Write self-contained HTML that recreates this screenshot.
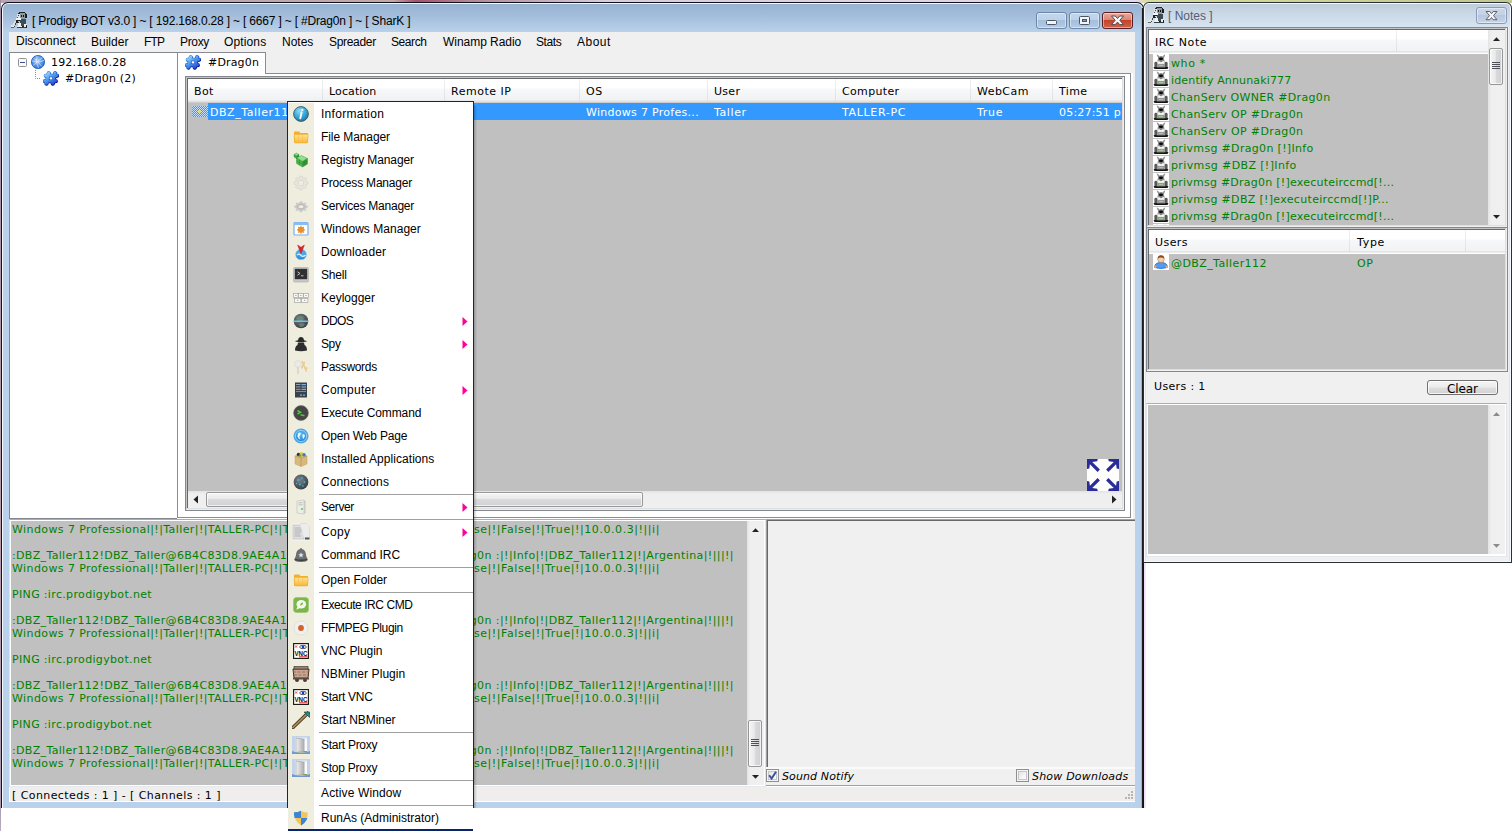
<!DOCTYPE html>
<html lang="en"><head><meta charset="utf-8"><title>Prodigy BOT v3.0</title>
<style>
html,body{margin:0;padding:0;background:#fff;}
body{width:1512px;height:831px;position:relative;overflow:hidden;}
div,span.t,svg{position:absolute;box-sizing:border-box;}
span.t{white-space:pre;color:#000;}
.ls{font:12px/16px "Liberation Sans",sans-serif;}
.dv{font:11px/14px "DejaVu Sans","Liberation Sans",sans-serif;}
.it{font-style:italic;}
</style></head>
<body>
<div style="left:0px;top:0px;width:1512px;height:3px;background:linear-gradient(90deg,#b8a4b4 0,#c4a8ac 26%,#a85070 27.5%,#b08898 31%,#d8cce0 40%,#e4d8ec 75%,#d8dc9c 76%,#c0c890 100%);"></div>
<div style="left:0px;top:0px;width:1px;height:831px;background:linear-gradient(180deg,#a08ea2 0,#b49aa6 60%,#a99bb0 97%,#b8aec0 100%);"></div>
<div style="left:1px;top:2px;width:1143px;height:806px;background:#10141a;border-radius:7px 7px 0 0;"></div>
<div style="left:2px;top:3px;width:1141px;height:805px;background:#f4f8fd;border-radius:6px 6px 0 0;"></div>
<div style="left:3px;top:4px;width:1139px;height:804px;background:linear-gradient(180deg,#98b3d2 0,#a3bddb 12px,#b9d1ea 28px,#b9d1ea 100%);border-radius:5px 5px 0 0;"></div>
<div style="left:1141px;top:8px;width:1px;height:800px;background:#4fd2fa;"></div>
<div style="left:1142px;top:8px;width:1px;height:800px;background:#1c1718;"></div>
<div style="left:9px;top:32px;width:1126px;height:770px;background:#f0f0f0;"></div>
<span class="t ls" style="top:13px;left:32px;letter-spacing:-0.18px;">[ Prodigy BOT v3.0 ] ~ [ 192.168.0.28 ] ~ [ 6667 ] ~ [ #Drag0n ] ~ [ SharK ]</span>
<div style="left:1036px;top:12px;width:31px;height:17px;background:linear-gradient(180deg,#c3d6ec 0,#bdd1e9 45%,#a4bedc 50%,#b3cbe6 100%);border:1px solid #6d87a8;border-radius:3px;box-shadow:inset 0 0 0 1px rgba(255,255,255,.45);"></div>
<div style="left:1069px;top:12px;width:31px;height:17px;background:linear-gradient(180deg,#c3d6ec 0,#bdd1e9 45%,#a4bedc 50%,#b3cbe6 100%);border:1px solid #6d87a8;border-radius:3px;box-shadow:inset 0 0 0 1px rgba(255,255,255,.45);"></div>
<div style="left:1102px;top:12px;width:31px;height:17px;background:linear-gradient(180deg,#e9a99b 0,#dc8674 45%,#c5432b 50%,#cf6247 100%);border:1px solid #5a1f24;border-radius:3px;box-shadow:inset 0 0 0 1px rgba(255,255,255,.45);"></div>
<svg style="left:1046px;top:20px;" width="11" height="6" viewBox="0 0 11 6"><rect x="0.5" y="0.5" width="10" height="4" rx="1" fill="#f4f4f4" stroke="#4a5566"/></svg>
<svg style="left:1079px;top:16px;" width="11" height="10" viewBox="0 0 11 10"><rect x="0.5" y="0.5" width="10" height="8" rx="1" fill="#f4f4f4" stroke="#4a5566"/><rect x="3.5" y="3.5" width="4" height="2" fill="#7b9cc9" stroke="#4a5566"/></svg>
<svg style="left:1110px;top:15px;" width="15" height="11" viewBox="0 0 15 11"><path d="M1.5 1 L5.3 1 L7.5 3.5 L9.7 1 L13.500 1 L9.800 5.300 L13.500 9.600 L9.700 9.600 L7.500 7.100 L5.300 9.600 L1.500 9.600 L5.200 5.300 Z" fill="#f6f6f6" stroke="#4b4f5e" stroke-width="1"/></svg>
<span class="t ls" style="top:33px;left:16px;letter-spacing:0.02px;">Disconnect</span>
<span class="t ls" style="top:34px;left:91px;letter-spacing:0.01px;">Builder</span>
<span class="t ls" style="top:34px;left:144px;letter-spacing:-0.8px;">FTP</span>
<span class="t ls" style="top:34px;left:180px;letter-spacing:-0.34px;">Proxy</span>
<span class="t ls" style="top:34px;left:224px;letter-spacing:0.13px;">Options</span>
<span class="t ls" style="top:34px;left:282px;letter-spacing:-0.01px;">Notes</span>
<span class="t ls" style="top:34px;left:329px;letter-spacing:-0.31px;">Spreader</span>
<span class="t ls" style="top:34px;left:391px;letter-spacing:-0.42px;">Search</span>
<span class="t ls" style="top:34px;left:443px;letter-spacing:-0.04px;">Winamp Radio</span>
<span class="t ls" style="top:34px;left:536px;letter-spacing:-0.41px;">Stats</span>
<span class="t ls" style="top:34px;left:577px;letter-spacing:0.49px;">About</span>
<div style="left:9px;top:52px;width:169px;height:467px;background:#fff;border:1px solid #828790;border-right:none;"></div>
<svg style="left:18px;top:58px;" width="9" height="9" viewBox="0 0 9 9"><rect x="0.5" y="0.5" width="8" height="8" rx="1" fill="#fafafa" stroke="#919191"/><rect x="2" y="4" width="5" height="1" fill="#3f4f9a"/></svg>
<svg style="left:35px;top:70px;" width="8" height="9" viewBox="0 0 8 9"><path d="M0.5 0 V8.5 H6" fill="none" stroke="#8a8a8a" stroke-width="1" stroke-dasharray="1 1"/></svg>
<span class="t dv" style="top:56px;left:51px;letter-spacing:0.17px;">192.168.0.28</span>
<span class="t dv" style="top:72px;left:65px;letter-spacing:0.18px;">#Drag0n (2)</span>
<div style="left:177px;top:73px;width:956px;height:446px;background:#fff;"></div>
<div style="left:177px;top:73px;width:954px;height:445px;background:#fff;border:1px solid #898c95;"></div>
<div style="left:177px;top:52px;width:89px;height:22px;background:#fff;border:1px solid #898c95;border-bottom:none;"></div>
<span class="t dv" style="top:56px;left:208px;letter-spacing:0.16px;">#Drag0n</span>
<div style="left:185px;top:76px;width:940px;height:435px;background:#828790;"></div>
<div style="left:186px;top:77px;width:938px;height:433px;background:#efefef;"></div>
<div style="left:186px;top:77px;width:937px;height:432px;background:#c4c4c4;"></div>
<div style="left:187px;top:78px;width:936px;height:431px;background:#dedede;"></div>
<div style="left:187px;top:78px;width:935px;height:430px;background:#696969;"></div>
<div style="left:188px;top:79px;width:934px;height:429px;background:#c0c0c0;"></div>
<div style="left:188px;top:79px;width:934px;height:24px;background:linear-gradient(180deg,#fff 0,#fff 9px,#f7f8fa 10px,#f1f2f4 21px,#e0e1e3 22px,#e0e1e3 23px,#cdcdcd 23px);"></div>
<div style="left:322px;top:79px;width:1px;height:22px;background:linear-gradient(180deg,#f2f2f2,#dedfe1);"></div>
<div style="left:444px;top:79px;width:1px;height:22px;background:linear-gradient(180deg,#f2f2f2,#dedfe1);"></div>
<div style="left:579px;top:79px;width:1px;height:22px;background:linear-gradient(180deg,#f2f2f2,#dedfe1);"></div>
<div style="left:707px;top:79px;width:1px;height:22px;background:linear-gradient(180deg,#f2f2f2,#dedfe1);"></div>
<div style="left:835px;top:79px;width:1px;height:22px;background:linear-gradient(180deg,#f2f2f2,#dedfe1);"></div>
<div style="left:970px;top:79px;width:1px;height:22px;background:linear-gradient(180deg,#f2f2f2,#dedfe1);"></div>
<div style="left:1052px;top:79px;width:1px;height:22px;background:linear-gradient(180deg,#f2f2f2,#dedfe1);"></div>
<span class="t dv" style="top:85px;left:194px;letter-spacing:0.37px;">Bot</span>
<span class="t dv" style="top:85px;left:329px;letter-spacing:0.11px;">Location</span>
<span class="t dv" style="top:85px;left:451px;letter-spacing:0.52px;">Remote IP</span>
<span class="t dv" style="top:85px;left:586px;letter-spacing:0.7px;">OS</span>
<span class="t dv" style="top:85px;left:714px;letter-spacing:0.28px;">User</span>
<span class="t dv" style="top:85px;left:842px;letter-spacing:0.34px;">Computer</span>
<span class="t dv" style="top:85px;left:977px;letter-spacing:0.46px;">WebCam</span>
<span class="t dv" style="top:85px;left:1059px;letter-spacing:0.39px;">Time</span>
<div style="left:208px;top:103px;width:914px;height:17px;background:#3399ff;"></div>
<div style="left:192px;top:106px;width:16px;height:11px;background:repeating-conic-gradient(#3399ff 0 25%,#c8dff8 0 50%) 0 0/2px 2px;"></div>
<div style="left:198px;top:110px;width:3px;height:3px;background:#d8d890;"></div>
<span class="t dv" style="top:106px;left:210px;color:#fff;letter-spacing:0.55px;">DBZ_Taller112</span>
<span class="t dv" style="top:106px;left:586px;color:#fff;letter-spacing:0.29px;">Windows 7 Profes...</span>
<span class="t dv" style="top:106px;left:714px;color:#fff;letter-spacing:0.61px;">Taller</span>
<span class="t dv" style="top:106px;left:842px;color:#fff;letter-spacing:0.66px;">TALLER-PC</span>
<span class="t dv" style="top:106px;left:977px;color:#fff;letter-spacing:0.7px;">True</span>
<div style="left:1059px;top:103px;width:63px;height:17px;overflow:hidden;"><span class="t dv" style="left:0;top:3px;color:#fff;letter-spacing:0.2px;">05:27:51 p.m.</span></div>
<div style="left:188px;top:491px;width:934px;height:17px;background:linear-gradient(180deg,#e3e3e3 0,#efefef 3px,#f0f0f0 100%);"></div>
<div style="left:206px;top:492px;width:437px;height:15px;background:linear-gradient(180deg,#f5f5f5 0,#e9e9eb 45%,#d9dadc 50%,#cfd0d3 100%);border:1px solid #979797;border-radius:2px;box-shadow:inset 0 0 0 1px rgba(255,255,255,.7);"></div>
<svg style="left:193px;top:495px;" width="6" height="9" viewBox="0 0 6 9"><path d="M5 0.5 L0.5 4.5 L5 8.5 Z" fill="#222"/></svg>
<svg style="left:1111px;top:495px;" width="6" height="9" viewBox="0 0 6 9"><path d="M1 0.5 L5.5 4.5 L1 8.5 Z" fill="#222"/></svg>
<svg style="left:1087px;top:459px;" width="32" height="32" viewBox="0 0 32 32"><rect width="32" height="32" fill="#fdfdfb"/><g fill="#2a2c99"><path d="M0 0 H10.800 L10.200 2.300 L5.200 2.900 L12.900 10.600 L10.600 12.900 L2.900 5.200 L2.300 9.600 L0 10 Z"/><path transform="translate(32 0) scale(-1 1)" d="M0 0 H10.800 L10.200 2.300 L5.200 2.900 L12.900 10.600 L10.600 12.900 L2.900 5.200 L2.300 9.600 L0 10 Z"/><path transform="translate(0 32) scale(1 -1)" d="M0 0 H10.800 L10.200 2.300 L5.200 2.900 L12.900 10.600 L10.600 12.900 L2.900 5.200 L2.300 9.600 L0 10 Z"/><path transform="translate(32 32) scale(-1 -1)" d="M0 0 H10.800 L10.200 2.300 L5.200 2.900 L12.900 10.600 L10.600 12.900 L2.900 5.200 L2.300 9.600 L0 10 Z"/></g></svg>
<div style="left:9px;top:519px;width:757px;height:268px;background:#fff;border:1px solid #e2e3ea;border-top-color:#abadb3;border-bottom-color:#e3e9ef;"></div>
<div style="left:11px;top:521px;width:736px;height:264px;background:#c0c0c0;"></div>
<div style="left:747px;top:521px;width:17px;height:264px;background:linear-gradient(90deg,#e3e3e3 0,#efefef 3px,#f0f0f0 100%);"></div>
<svg style="left:751px;top:527px;" width="9" height="6" viewBox="0 0 9 6"><path d="M1 5 L4.500 1.200 L8 5 Z" fill="#222"/></svg>
<svg style="left:751px;top:774px;" width="9" height="6" viewBox="0 0 9 6"><path d="M1 1 L4.500 4.800 L8 1 Z" fill="#222"/></svg>
<div style="left:748px;top:720px;width:14px;height:47px;background:linear-gradient(90deg,#f5f5f5 0,#e9e9eb 45%,#d9dadc 50%,#cfd0d3 100%);border:1px solid #979797;border-radius:2px;box-shadow:inset 0 0 0 1px rgba(255,255,255,.7);"></div>
<div style="left:751px;top:739px;width:8px;height:1px;background:#4d5157;"></div>
<div style="left:751px;top:741px;width:8px;height:1px;background:#4d5157;"></div>
<div style="left:751px;top:743px;width:8px;height:1px;background:#4d5157;"></div>
<div style="left:751px;top:745px;width:8px;height:1px;background:#4d5157;"></div>
<div style="left:11px;top:521px;width:736px;height:264px;overflow:hidden;">
<span class="t dv" style="left:1px;top:2px;color:#008000;letter-spacing:0.41px;max-width:290px;overflow:hidden;">Windows 7 Professional|!|Taller|!|TALLER-PC|!|True|!|05:27:51 p.m.|!|Fal</span>
<span class="t dv" style="right:87px;top:2px;color:#008000;letter-spacing:0.57px;">se|!|False|!|True|!|10.0.0.3|!||i|</span>
<span class="t dv" style="left:1px;top:28px;color:#008000;letter-spacing:0.33px;max-width:290px;overflow:hidden;">:DBZ_Taller112!DBZ_Taller@6B4C83D8.9AE4A1C7.5D20F1B3.IP PRIVMSG #Dra</span>
<span class="t dv" style="right:13px;top:28px;color:#008000;letter-spacing:0.42px;">g0n :|!|Info|!|DBZ_Taller112|!|Argentina|!|||!|</span>
<span class="t dv" style="left:1px;top:41px;color:#008000;letter-spacing:0.41px;max-width:290px;overflow:hidden;">Windows 7 Professional|!|Taller|!|TALLER-PC|!|True|!|05:27:51 p.m.|!|Fal</span>
<span class="t dv" style="right:87px;top:41px;color:#008000;letter-spacing:0.57px;">se|!|False|!|True|!|10.0.0.3|!||i|</span>
<span class="t dv" style="left:1px;top:67px;color:#008000;letter-spacing:0.34px;max-width:Nonepx;overflow:hidden;">PING :irc.prodigybot.net</span>
<span class="t dv" style="left:1px;top:93px;color:#008000;letter-spacing:0.33px;max-width:290px;overflow:hidden;">:DBZ_Taller112!DBZ_Taller@6B4C83D8.9AE4A1C7.5D20F1B3.IP PRIVMSG #Dra</span>
<span class="t dv" style="right:13px;top:93px;color:#008000;letter-spacing:0.42px;">g0n :|!|Info|!|DBZ_Taller112|!|Argentina|!|||!|</span>
<span class="t dv" style="left:1px;top:106px;color:#008000;letter-spacing:0.41px;max-width:290px;overflow:hidden;">Windows 7 Professional|!|Taller|!|TALLER-PC|!|True|!|05:27:51 p.m.|!|Fal</span>
<span class="t dv" style="right:87px;top:106px;color:#008000;letter-spacing:0.57px;">se|!|False|!|True|!|10.0.0.3|!||i|</span>
<span class="t dv" style="left:1px;top:132px;color:#008000;letter-spacing:0.34px;max-width:Nonepx;overflow:hidden;">PING :irc.prodigybot.net</span>
<span class="t dv" style="left:1px;top:158px;color:#008000;letter-spacing:0.33px;max-width:290px;overflow:hidden;">:DBZ_Taller112!DBZ_Taller@6B4C83D8.9AE4A1C7.5D20F1B3.IP PRIVMSG #Dra</span>
<span class="t dv" style="right:13px;top:158px;color:#008000;letter-spacing:0.42px;">g0n :|!|Info|!|DBZ_Taller112|!|Argentina|!|||!|</span>
<span class="t dv" style="left:1px;top:171px;color:#008000;letter-spacing:0.41px;max-width:290px;overflow:hidden;">Windows 7 Professional|!|Taller|!|TALLER-PC|!|True|!|05:27:51 p.m.|!|Fal</span>
<span class="t dv" style="right:87px;top:171px;color:#008000;letter-spacing:0.57px;">se|!|False|!|True|!|10.0.0.3|!||i|</span>
<span class="t dv" style="left:1px;top:197px;color:#008000;letter-spacing:0.34px;max-width:Nonepx;overflow:hidden;">PING :irc.prodigybot.net</span>
<span class="t dv" style="left:1px;top:223px;color:#008000;letter-spacing:0.33px;max-width:290px;overflow:hidden;">:DBZ_Taller112!DBZ_Taller@6B4C83D8.9AE4A1C7.5D20F1B3.IP PRIVMSG #Dra</span>
<span class="t dv" style="right:13px;top:223px;color:#008000;letter-spacing:0.42px;">g0n :|!|Info|!|DBZ_Taller112|!|Argentina|!|||!|</span>
<span class="t dv" style="left:1px;top:236px;color:#008000;letter-spacing:0.41px;max-width:290px;overflow:hidden;">Windows 7 Professional|!|Taller|!|TALLER-PC|!|True|!|05:27:51 p.m.|!|Fal</span>
<span class="t dv" style="right:87px;top:236px;color:#008000;letter-spacing:0.57px;">se|!|False|!|True|!|10.0.0.3|!||i|</span>
</div>
<div style="left:766px;top:519px;width:369px;height:249px;background:#a0a0a0;"></div>
<div style="left:767px;top:520px;width:368px;height:248px;background:#696969;"></div>
<div style="left:768px;top:521px;width:367px;height:247px;background:#f0f0f0;"></div>
<div style="left:766px;top:767px;width:369px;height:2px;background:#fbfbfb;"></div>
<div style="left:766px;top:769px;width:13px;height:13px;background:linear-gradient(135deg,#d9dadc 0,#f6f6f6 60%,#fff 100%);border:1px solid #8e8f8f;box-shadow:inset 0 0 0 1px #f4f4f4, inset 0 0 0 2px #c4c6ca;"></div>
<svg style="left:768px;top:771px;" width="9" height="9" viewBox="0 0 9 9"><path d="M1.2 4.2 L3.6 7.6 L8 0.8" fill="none" stroke="#3a4f9c" stroke-width="1.9"/></svg>
<span class="t dv" style="top:770px;left:782px;letter-spacing:0.11px;font-style:italic;">Sound Notify</span>
<div style="left:1016px;top:769px;width:13px;height:13px;background:linear-gradient(135deg,#d9dadc 0,#f6f6f6 60%,#fff 100%);border:1px solid #8e8f8f;box-shadow:inset 0 0 0 1px #f4f4f4, inset 0 0 0 2px #c4c6ca;"></div>
<span class="t dv" style="top:770px;left:1032px;letter-spacing:0.2px;font-style:italic;">Show Downloads</span>
<div style="left:766px;top:785px;width:369px;height:1px;background:#a0a0a0;"></div>
<div style="left:766px;top:786px;width:369px;height:1px;background:#fff;"></div>
<div style="left:9px;top:787px;width:1126px;height:15px;background:#fff;"></div>
<div style="left:10px;top:787px;width:1125px;height:14px;background:#f0eded;"></div>
<span class="t dv" style="top:789px;left:12px;letter-spacing:0.42px;">[ Connecteds : 1 ] - [ Channels : 1 ]</span>
<div style="left:1131px;top:791px;width:2px;height:2px;background:#b8b4b4;"></div>
<div style="left:1128px;top:794px;width:2px;height:2px;background:#b8b4b4;"></div>
<div style="left:1131px;top:794px;width:2px;height:2px;background:#b8b4b4;"></div>
<div style="left:1125px;top:797px;width:2px;height:2px;background:#b8b4b4;"></div>
<div style="left:1128px;top:797px;width:2px;height:2px;background:#b8b4b4;"></div>
<div style="left:1131px;top:797px;width:2px;height:2px;background:#b8b4b4;"></div>
<div style="left:1143px;top:2px;width:369px;height:561px;background:#2a2f38;border-radius:6px 6px 0 0;"></div>
<div style="left:1144px;top:3px;width:367px;height:559px;background:#f6f9fd;border-radius:5px 5px 0 0;"></div>
<div style="left:1145px;top:4px;width:365px;height:557px;background:linear-gradient(180deg,#bfcddb 0,#cbd8e6 10px,#d7e4f2 23px,#d7e4f2 100%);border-radius:4px 4px 0 0;"></div>
<div style="left:1146px;top:27px;width:363px;height:534px;background:#f0f0f0;"></div>
<div style="left:1144px;top:563px;width:2px;height:245px;background:linear-gradient(90deg,#e6dcf4,#f4eefa);"></div>
<span class="t ls" style="top:8px;left:1168px;color:#565e74;letter-spacing:0px;">[ Notes ]</span>
<div style="left:1476px;top:7px;width:31px;height:17px;background:linear-gradient(180deg,#c9d7e7 0,#c3d2e4 45%,#b6c8de 50%,#c6d5e7 100%);border:1px solid #8a9bbd;border-radius:3px;box-shadow:inset 0 0 0 1px rgba(255,255,255,.45);"></div>
<svg style="left:1485px;top:10px;" width="13" height="11" viewBox="0 0 13 11"><path d="M1 1.500 L4.800 1.500 L6.500 3.700 L8.200 1.500 L12 1.500 L8.500 5.600 L12 9.700 L8.200 9.700 L6.500 7.500 L4.800 9.700 L1 9.700 L4.500 5.600 Z" fill="#f6f6f6" stroke="#5a5f6e" stroke-width="1"/></svg>
<div style="left:1146px;top:27px;width:362px;height:201px;background:#828790;"></div>
<div style="left:1147px;top:28px;width:360px;height:199px;background:#efefef;"></div>
<div style="left:1147px;top:28px;width:359px;height:198px;background:#c4c4c4;"></div>
<div style="left:1148px;top:29px;width:358px;height:197px;background:#dedede;"></div>
<div style="left:1148px;top:29px;width:357px;height:196px;background:#696969;"></div>
<div style="left:1149px;top:30px;width:356px;height:195px;background:#c0c0c0;"></div>
<div style="left:1149px;top:30px;width:339px;height:24px;background:linear-gradient(180deg,#fff 0,#fff 9px,#f7f8fa 10px,#f1f2f4 21px,#d8d8d8 22px,#fff 23px);"></div>
<div style="left:1396px;top:30px;width:1px;height:22px;background:linear-gradient(180deg,#f2f2f2,#dedfe1);"></div>
<span class="t dv" style="top:36px;left:1155px;letter-spacing:0.57px;">IRC Note</span>
<div style="left:1488px;top:30px;width:17px;height:195px;background:linear-gradient(90deg,#e3e3e3 0,#efefef 3px,#f0f0f0 100%);"></div>
<svg style="left:1492px;top:36px;" width="9" height="6" viewBox="0 0 9 6"><path d="M1 5 L4.500 1.200 L8 5 Z" fill="#222"/></svg>
<svg style="left:1492px;top:214px;" width="9" height="6" viewBox="0 0 9 6"><path d="M1 1 L4.500 4.800 L8 1 Z" fill="#222"/></svg>
<div style="left:1489px;top:48px;width:14px;height:37px;background:linear-gradient(90deg,#f5f5f5 0,#e9e9eb 45%,#d9dadc 50%,#cfd0d3 100%);border:1px solid #979797;border-radius:2px;box-shadow:inset 0 0 0 1px rgba(255,255,255,.7);"></div>
<div style="left:1492px;top:62px;width:8px;height:1px;background:#4d5157;"></div>
<div style="left:1492px;top:64px;width:8px;height:1px;background:#4d5157;"></div>
<div style="left:1492px;top:66px;width:8px;height:1px;background:#4d5157;"></div>
<div style="left:1492px;top:68px;width:8px;height:1px;background:#4d5157;"></div>
<div style="left:1149px;top:54px;width:339px;height:171px;overflow:hidden;">
<svg style="left:4px;top:0px" width="16" height="16" viewBox="0 0 16 16"><rect width="16" height="16" fill="#fff"/><path d="M3.600 .600 L5.200 .900 L7 3.800 L5.400 4.800 Z M12.400 .600 L10.800 .900 L9 3.800 L10.600 4.800 Z" fill="#909090"/><path d="M4.600 8.600 Q4.300 2 8 2 Q11.700 2 11.400 8.600 Z" fill="#858585"/><ellipse cx="8" cy="4.800" rx="2.100" ry="1.400" fill="#0c0c0c"/><path d="M5.400 6.400 L8 8.800 L10.600 6.400 L10.800 8.800 L8 10.400 L5.200 8.800 Z" fill="#fff"/><rect x="1.400" y="7.800" width="3" height="6.200" rx="1.400" fill="#5a5a5a"/><rect x="11.600" y="7.800" width="3" height="6.200" rx="1.400" fill="#5a5a5a"/><rect x="4.200" y="9.800" width="7.600" height="3.400" fill="#949494"/><rect x="5.800" y="10.900" width="4.400" height="1.200" fill="#9ccf88"/><path d="M.600 13.600 Q.600 12.900 1.800 12.900 L4.500 13.200 H11.500 L14.200 12.900 Q15.400 12.900 15.400 13.600 Q15.400 15.100 13 15.100 H3 Q.600 15.100 .600 13.600 Z" fill="#121212"/></svg>
<span class="t dv" style="left:22px;top:3px;color:#008000;letter-spacing:0.62px;">who *</span>
<svg style="left:4px;top:17px" width="16" height="16" viewBox="0 0 16 16"><rect width="16" height="16" fill="#fff"/><path d="M3.600 .600 L5.200 .900 L7 3.800 L5.400 4.800 Z M12.400 .600 L10.800 .900 L9 3.800 L10.600 4.800 Z" fill="#909090"/><path d="M4.600 8.600 Q4.300 2 8 2 Q11.700 2 11.400 8.600 Z" fill="#858585"/><ellipse cx="8" cy="4.800" rx="2.100" ry="1.400" fill="#0c0c0c"/><path d="M5.400 6.400 L8 8.800 L10.600 6.400 L10.800 8.800 L8 10.400 L5.200 8.800 Z" fill="#fff"/><rect x="1.400" y="7.800" width="3" height="6.200" rx="1.400" fill="#5a5a5a"/><rect x="11.600" y="7.800" width="3" height="6.200" rx="1.400" fill="#5a5a5a"/><rect x="4.200" y="9.800" width="7.600" height="3.400" fill="#949494"/><rect x="5.800" y="10.900" width="4.400" height="1.200" fill="#9ccf88"/><path d="M.600 13.600 Q.600 12.900 1.800 12.900 L4.500 13.200 H11.500 L14.200 12.900 Q15.400 12.900 15.400 13.600 Q15.400 15.100 13 15.100 H3 Q.600 15.100 .600 13.600 Z" fill="#121212"/></svg>
<span class="t dv" style="left:22px;top:20px;color:#008000;letter-spacing:0.15px;">identify Annunaki777</span>
<svg style="left:4px;top:34px" width="16" height="16" viewBox="0 0 16 16"><rect width="16" height="16" fill="#fff"/><path d="M3.600 .600 L5.200 .900 L7 3.800 L5.400 4.800 Z M12.400 .600 L10.800 .900 L9 3.800 L10.600 4.800 Z" fill="#909090"/><path d="M4.600 8.600 Q4.300 2 8 2 Q11.700 2 11.400 8.600 Z" fill="#858585"/><ellipse cx="8" cy="4.800" rx="2.100" ry="1.400" fill="#0c0c0c"/><path d="M5.400 6.400 L8 8.800 L10.600 6.400 L10.800 8.800 L8 10.400 L5.200 8.800 Z" fill="#fff"/><rect x="1.400" y="7.800" width="3" height="6.200" rx="1.400" fill="#5a5a5a"/><rect x="11.600" y="7.800" width="3" height="6.200" rx="1.400" fill="#5a5a5a"/><rect x="4.200" y="9.800" width="7.600" height="3.400" fill="#949494"/><rect x="5.800" y="10.900" width="4.400" height="1.200" fill="#9ccf88"/><path d="M.600 13.600 Q.600 12.900 1.800 12.900 L4.500 13.200 H11.500 L14.200 12.900 Q15.400 12.900 15.400 13.600 Q15.400 15.100 13 15.100 H3 Q.600 15.100 .600 13.600 Z" fill="#121212"/></svg>
<span class="t dv" style="left:22px;top:37px;color:#008000;letter-spacing:0.32px;">ChanServ OWNER #Drag0n</span>
<svg style="left:4px;top:51px" width="16" height="16" viewBox="0 0 16 16"><rect width="16" height="16" fill="#fff"/><path d="M3.600 .600 L5.200 .900 L7 3.800 L5.400 4.800 Z M12.400 .600 L10.800 .900 L9 3.800 L10.600 4.800 Z" fill="#909090"/><path d="M4.600 8.600 Q4.300 2 8 2 Q11.700 2 11.400 8.600 Z" fill="#858585"/><ellipse cx="8" cy="4.800" rx="2.100" ry="1.400" fill="#0c0c0c"/><path d="M5.400 6.400 L8 8.800 L10.600 6.400 L10.800 8.800 L8 10.400 L5.200 8.800 Z" fill="#fff"/><rect x="1.400" y="7.800" width="3" height="6.200" rx="1.400" fill="#5a5a5a"/><rect x="11.600" y="7.800" width="3" height="6.200" rx="1.400" fill="#5a5a5a"/><rect x="4.200" y="9.800" width="7.600" height="3.400" fill="#949494"/><rect x="5.800" y="10.900" width="4.400" height="1.200" fill="#9ccf88"/><path d="M.600 13.600 Q.600 12.900 1.800 12.900 L4.500 13.200 H11.500 L14.200 12.900 Q15.400 12.900 15.400 13.600 Q15.400 15.100 13 15.100 H3 Q.600 15.100 .600 13.600 Z" fill="#121212"/></svg>
<span class="t dv" style="left:22px;top:54px;color:#008000;letter-spacing:0.37px;">ChanServ OP #Drag0n</span>
<svg style="left:4px;top:68px" width="16" height="16" viewBox="0 0 16 16"><rect width="16" height="16" fill="#fff"/><path d="M3.600 .600 L5.200 .900 L7 3.800 L5.400 4.800 Z M12.400 .600 L10.800 .900 L9 3.800 L10.600 4.800 Z" fill="#909090"/><path d="M4.600 8.600 Q4.300 2 8 2 Q11.700 2 11.400 8.600 Z" fill="#858585"/><ellipse cx="8" cy="4.800" rx="2.100" ry="1.400" fill="#0c0c0c"/><path d="M5.400 6.400 L8 8.800 L10.600 6.400 L10.800 8.800 L8 10.400 L5.200 8.800 Z" fill="#fff"/><rect x="1.400" y="7.800" width="3" height="6.200" rx="1.400" fill="#5a5a5a"/><rect x="11.600" y="7.800" width="3" height="6.200" rx="1.400" fill="#5a5a5a"/><rect x="4.200" y="9.800" width="7.600" height="3.400" fill="#949494"/><rect x="5.800" y="10.900" width="4.400" height="1.200" fill="#9ccf88"/><path d="M.600 13.600 Q.600 12.900 1.800 12.900 L4.500 13.200 H11.500 L14.200 12.900 Q15.400 12.900 15.400 13.600 Q15.400 15.100 13 15.100 H3 Q.600 15.100 .600 13.600 Z" fill="#121212"/></svg>
<span class="t dv" style="left:22px;top:71px;color:#008000;letter-spacing:0.37px;">ChanServ OP #Drag0n</span>
<svg style="left:4px;top:85px" width="16" height="16" viewBox="0 0 16 16"><rect width="16" height="16" fill="#fff"/><path d="M3.600 .600 L5.200 .900 L7 3.800 L5.400 4.800 Z M12.400 .600 L10.800 .900 L9 3.800 L10.600 4.800 Z" fill="#909090"/><path d="M4.600 8.600 Q4.300 2 8 2 Q11.700 2 11.400 8.600 Z" fill="#858585"/><ellipse cx="8" cy="4.800" rx="2.100" ry="1.400" fill="#0c0c0c"/><path d="M5.400 6.400 L8 8.800 L10.600 6.400 L10.800 8.800 L8 10.400 L5.200 8.800 Z" fill="#fff"/><rect x="1.400" y="7.800" width="3" height="6.200" rx="1.400" fill="#5a5a5a"/><rect x="11.600" y="7.800" width="3" height="6.200" rx="1.400" fill="#5a5a5a"/><rect x="4.200" y="9.800" width="7.600" height="3.400" fill="#949494"/><rect x="5.800" y="10.900" width="4.400" height="1.200" fill="#9ccf88"/><path d="M.600 13.600 Q.600 12.900 1.800 12.900 L4.500 13.200 H11.500 L14.200 12.900 Q15.400 12.900 15.400 13.600 Q15.400 15.100 13 15.100 H3 Q.600 15.100 .600 13.600 Z" fill="#121212"/></svg>
<span class="t dv" style="left:22px;top:88px;color:#008000;letter-spacing:0.32px;">privmsg #Drag0n [!]Info</span>
<svg style="left:4px;top:102px" width="16" height="16" viewBox="0 0 16 16"><rect width="16" height="16" fill="#fff"/><path d="M3.600 .600 L5.200 .900 L7 3.800 L5.400 4.800 Z M12.400 .600 L10.800 .900 L9 3.800 L10.600 4.800 Z" fill="#909090"/><path d="M4.600 8.600 Q4.300 2 8 2 Q11.700 2 11.400 8.600 Z" fill="#858585"/><ellipse cx="8" cy="4.800" rx="2.100" ry="1.400" fill="#0c0c0c"/><path d="M5.400 6.400 L8 8.800 L10.600 6.400 L10.800 8.800 L8 10.400 L5.200 8.800 Z" fill="#fff"/><rect x="1.400" y="7.800" width="3" height="6.200" rx="1.400" fill="#5a5a5a"/><rect x="11.600" y="7.800" width="3" height="6.200" rx="1.400" fill="#5a5a5a"/><rect x="4.200" y="9.800" width="7.600" height="3.400" fill="#949494"/><rect x="5.800" y="10.900" width="4.400" height="1.200" fill="#9ccf88"/><path d="M.600 13.600 Q.600 12.900 1.800 12.900 L4.500 13.200 H11.500 L14.200 12.900 Q15.400 12.900 15.400 13.600 Q15.400 15.100 13 15.100 H3 Q.600 15.100 .600 13.600 Z" fill="#121212"/></svg>
<span class="t dv" style="left:22px;top:105px;color:#008000;letter-spacing:0.38px;">privmsg #DBZ [!]Info</span>
<svg style="left:4px;top:119px" width="16" height="16" viewBox="0 0 16 16"><rect width="16" height="16" fill="#fff"/><path d="M3.600 .600 L5.200 .900 L7 3.800 L5.400 4.800 Z M12.400 .600 L10.800 .900 L9 3.800 L10.600 4.800 Z" fill="#909090"/><path d="M4.600 8.600 Q4.300 2 8 2 Q11.700 2 11.400 8.600 Z" fill="#858585"/><ellipse cx="8" cy="4.800" rx="2.100" ry="1.400" fill="#0c0c0c"/><path d="M5.400 6.400 L8 8.800 L10.600 6.400 L10.800 8.800 L8 10.400 L5.200 8.800 Z" fill="#fff"/><rect x="1.400" y="7.800" width="3" height="6.200" rx="1.400" fill="#5a5a5a"/><rect x="11.600" y="7.800" width="3" height="6.200" rx="1.400" fill="#5a5a5a"/><rect x="4.200" y="9.800" width="7.600" height="3.400" fill="#949494"/><rect x="5.800" y="10.900" width="4.400" height="1.200" fill="#9ccf88"/><path d="M.600 13.600 Q.600 12.900 1.800 12.900 L4.500 13.200 H11.500 L14.200 12.900 Q15.400 12.900 15.400 13.600 Q15.400 15.100 13 15.100 H3 Q.600 15.100 .600 13.600 Z" fill="#121212"/></svg>
<span class="t dv" style="left:22px;top:122px;color:#008000;letter-spacing:0.24px;">privmsg #Drag0n [!]executeirccmd[!...</span>
<svg style="left:4px;top:136px" width="16" height="16" viewBox="0 0 16 16"><rect width="16" height="16" fill="#fff"/><path d="M3.600 .600 L5.200 .900 L7 3.800 L5.400 4.800 Z M12.400 .600 L10.800 .900 L9 3.800 L10.600 4.800 Z" fill="#909090"/><path d="M4.600 8.600 Q4.300 2 8 2 Q11.700 2 11.400 8.600 Z" fill="#858585"/><ellipse cx="8" cy="4.800" rx="2.100" ry="1.400" fill="#0c0c0c"/><path d="M5.400 6.400 L8 8.800 L10.600 6.400 L10.800 8.800 L8 10.400 L5.200 8.800 Z" fill="#fff"/><rect x="1.400" y="7.800" width="3" height="6.200" rx="1.400" fill="#5a5a5a"/><rect x="11.600" y="7.800" width="3" height="6.200" rx="1.400" fill="#5a5a5a"/><rect x="4.200" y="9.800" width="7.600" height="3.400" fill="#949494"/><rect x="5.800" y="10.900" width="4.400" height="1.200" fill="#9ccf88"/><path d="M.600 13.600 Q.600 12.900 1.800 12.900 L4.500 13.200 H11.500 L14.200 12.900 Q15.400 12.900 15.400 13.600 Q15.400 15.100 13 15.100 H3 Q.600 15.100 .600 13.600 Z" fill="#121212"/></svg>
<span class="t dv" style="left:22px;top:139px;color:#008000;letter-spacing:0.32px;">privmsg #DBZ [!]executeirccmd[!]P...</span>
<svg style="left:4px;top:153px" width="16" height="16" viewBox="0 0 16 16"><rect width="16" height="16" fill="#fff"/><path d="M3.600 .600 L5.200 .900 L7 3.800 L5.400 4.800 Z M12.400 .600 L10.800 .900 L9 3.800 L10.600 4.800 Z" fill="#909090"/><path d="M4.600 8.600 Q4.300 2 8 2 Q11.700 2 11.400 8.600 Z" fill="#858585"/><ellipse cx="8" cy="4.800" rx="2.100" ry="1.400" fill="#0c0c0c"/><path d="M5.400 6.400 L8 8.800 L10.600 6.400 L10.800 8.800 L8 10.400 L5.200 8.800 Z" fill="#fff"/><rect x="1.400" y="7.800" width="3" height="6.200" rx="1.400" fill="#5a5a5a"/><rect x="11.600" y="7.800" width="3" height="6.200" rx="1.400" fill="#5a5a5a"/><rect x="4.200" y="9.800" width="7.600" height="3.400" fill="#949494"/><rect x="5.800" y="10.900" width="4.400" height="1.200" fill="#9ccf88"/><path d="M.600 13.600 Q.600 12.900 1.800 12.900 L4.500 13.200 H11.500 L14.200 12.900 Q15.400 12.900 15.400 13.600 Q15.400 15.100 13 15.100 H3 Q.600 15.100 .600 13.600 Z" fill="#121212"/></svg>
<span class="t dv" style="left:22px;top:156px;color:#008000;letter-spacing:0.24px;">privmsg #Drag0n [!]executeirccmd[!...</span>
<svg style="left:4px;top:170px" width="16" height="16" viewBox="0 0 16 16"><rect width="16" height="16" fill="#fff"/><path d="M3.600 .600 L5.200 .900 L7 3.800 L5.400 4.800 Z M12.400 .600 L10.800 .900 L9 3.800 L10.600 4.800 Z" fill="#909090"/><path d="M4.600 8.600 Q4.300 2 8 2 Q11.700 2 11.400 8.600 Z" fill="#858585"/><ellipse cx="8" cy="4.800" rx="2.100" ry="1.400" fill="#0c0c0c"/><path d="M5.400 6.400 L8 8.800 L10.600 6.400 L10.800 8.800 L8 10.400 L5.200 8.800 Z" fill="#fff"/><rect x="1.400" y="7.800" width="3" height="6.200" rx="1.400" fill="#5a5a5a"/><rect x="11.600" y="7.800" width="3" height="6.200" rx="1.400" fill="#5a5a5a"/><rect x="4.200" y="9.800" width="7.600" height="3.400" fill="#949494"/><rect x="5.800" y="10.900" width="4.400" height="1.200" fill="#9ccf88"/><path d="M.600 13.600 Q.600 12.900 1.800 12.900 L4.500 13.200 H11.500 L14.200 12.900 Q15.400 12.900 15.400 13.600 Q15.400 15.100 13 15.100 H3 Q.600 15.100 .600 13.600 Z" fill="#121212"/></svg>
</div>
<div style="left:1146px;top:227px;width:362px;height:145px;background:#828790;"></div>
<div style="left:1147px;top:228px;width:360px;height:143px;background:#efefef;"></div>
<div style="left:1147px;top:228px;width:359px;height:142px;background:#c4c4c4;"></div>
<div style="left:1148px;top:229px;width:358px;height:141px;background:#dedede;"></div>
<div style="left:1148px;top:229px;width:357px;height:140px;background:#696969;"></div>
<div style="left:1149px;top:230px;width:356px;height:139px;background:#c0c0c0;"></div>
<div style="left:1149px;top:230px;width:356px;height:24px;background:linear-gradient(180deg,#fff 0,#fff 9px,#f7f8fa 10px,#f1f2f4 21px,#d8d8d8 22px,#fff 23px);"></div>
<div style="left:1349px;top:230px;width:1px;height:22px;background:linear-gradient(180deg,#f2f2f2,#dedfe1);"></div>
<div style="left:1465px;top:230px;width:1px;height:22px;background:linear-gradient(180deg,#f2f2f2,#dedfe1);"></div>
<span class="t dv" style="top:236px;left:1155px;letter-spacing:0.44px;">Users</span>
<span class="t dv" style="top:236px;left:1357px;letter-spacing:0.7px;">Type</span>
<svg style="left:1153px;top:254px;" width="16" height="16" viewBox="0 0 16 16"><rect width="16" height="16" fill="#fff"/><path d="M1.500 13.500 Q1.500 8.500 8 8.500 Q14.500 8.500 14.500 13.500 Q8 15.500 1.500 13.500 Z" fill="#4f9cf0" stroke="#2a66c0" stroke-width=".8"/><circle cx="2.200" cy="12.800" r="1.300" fill="#e8a878"/><circle cx="13.800" cy="12.800" r="1.300" fill="#e8a878"/><circle cx="8" cy="5.200" r="3.300" fill="#f5cfae" stroke="#b07a50" stroke-width=".6"/><path d="M4.600 4.600 Q5 1.200 8 1.200 Q11 1.200 11.400 4.600 Q8 2.600 4.600 4.600 Z" fill="#8a4a1c"/></svg>
<span class="t dv" style="top:257px;left:1171px;color:#008000;letter-spacing:0.41px;">@DBZ_Taller112</span>
<span class="t dv" style="top:257px;left:1357px;color:#008000;letter-spacing:0.65px;">OP</span>
<span class="t dv" style="top:380px;left:1154px;letter-spacing:0.35px;">Users : 1</span>
<div style="left:1427px;top:380px;width:71px;height:15px;background:linear-gradient(180deg,#f4f4f4 0,#ececec 48%,#dedede 52%,#d2d2d2 100%);border:1px solid #707070;border-radius:3px;box-shadow:inset 0 0 0 1px rgba(255,255,255,.8);"></div>
<span class="t dv" style="top:382px;left:1447px;letter-spacing:-0.1px;font-size:12px;">Clear</span>
<div style="left:1146px;top:403px;width:361px;height:154px;background:#fff;border:1px solid #e2e3ea;border-top-color:#abadb3;border-bottom-color:#e3e9ef;"></div>
<div style="left:1148px;top:405px;width:340px;height:149px;background:#c0c0c0;"></div>
<div style="left:1488px;top:405px;width:17px;height:149px;background:linear-gradient(90deg,#e3e3e3 0,#efefef 3px,#f0f0f0 100%);"></div>
<svg style="left:1492px;top:411px;" width="9" height="6" viewBox="0 0 9 6"><path d="M1 5 L4.500 1.200 L8 5 Z" fill="#8a8a8a"/></svg>
<svg style="left:1492px;top:543px;" width="9" height="6" viewBox="0 0 9 6"><path d="M1 1 L4.500 4.800 L8 1 Z" fill="#8a8a8a"/></svg>
<div style="left:474px;top:105px;width:1px;height:703px;background:rgba(0,0,0,.18);"></div>
<div style="left:475px;top:106px;width:1px;height:702px;background:rgba(0,0,0,.10);"></div>
<div style="left:476px;top:107px;width:1px;height:701px;background:rgba(0,0,0,.04);"></div>
<div style="left:287px;top:101px;width:187px;height:730px;background:#fff;"></div>
<div style="left:288px;top:102px;width:26px;height:727px;background:#efedde;"></div>
<div style="left:288px;top:102px;width:185px;height:1px;background:#fff;"></div>
<div style="left:287px;top:101px;width:187px;height:1px;background:#0a246a;"></div>
<div style="left:287px;top:101px;width:1px;height:707px;background:#0a246a;"></div>
<div style="left:473px;top:101px;width:1px;height:707px;background:#0a246a;"></div>
<div style="left:288px;top:829px;width:185px;height:2px;background:#0a246a;"></div>
<span class="t ls" style="top:106px;left:321px;letter-spacing:0.29px;">Information</span>
<span class="t ls" style="top:129px;left:321px;letter-spacing:-0.09px;">File Manager</span>
<span class="t ls" style="top:152px;left:321px;letter-spacing:-0.11px;">Registry Manager</span>
<span class="t ls" style="top:175px;left:321px;letter-spacing:-0.2px;">Process Manager</span>
<span class="t ls" style="top:198px;left:321px;letter-spacing:-0.23px;">Services Manager</span>
<span class="t ls" style="top:221px;left:321px;letter-spacing:0.03px;">Windows Manager</span>
<span class="t ls" style="top:244px;left:321px;letter-spacing:0.1px;">Downloader</span>
<span class="t ls" style="top:267px;left:321px;letter-spacing:-0.22px;">Shell</span>
<span class="t ls" style="top:290px;left:321px;letter-spacing:-0.01px;">Keylogger</span>
<span class="t ls" style="top:313px;left:321px;letter-spacing:-0.67px;">DDOS</span>
<svg style="left:462px;top:317px;" width="6" height="9" viewBox="0 0 6 9"><path d="M0.5 0 L5.5 4.500 L0.500 9 Z" fill="#ff0099"/></svg>
<span class="t ls" style="top:336px;left:321px;letter-spacing:-0.4px;">Spy</span>
<svg style="left:462px;top:340px;" width="6" height="9" viewBox="0 0 6 9"><path d="M0.5 0 L5.5 4.500 L0.500 9 Z" fill="#ff0099"/></svg>
<span class="t ls" style="top:359px;left:321px;letter-spacing:-0.32px;">Passwords</span>
<span class="t ls" style="top:382px;left:321px;letter-spacing:0.25px;">Computer</span>
<svg style="left:462px;top:386px;" width="6" height="9" viewBox="0 0 6 9"><path d="M0.5 0 L5.5 4.500 L0.500 9 Z" fill="#ff0099"/></svg>
<span class="t ls" style="top:405px;left:321px;letter-spacing:-0.12px;">Execute Command</span>
<span class="t ls" style="top:428px;left:321px;letter-spacing:-0.17px;">Open Web Page</span>
<span class="t ls" style="top:451px;left:321px;letter-spacing:0.06px;">Installed Applications</span>
<span class="t ls" style="top:474px;left:321px;letter-spacing:0.12px;">Connections</span>
<div style="left:319px;top:494px;width:154px;height:1px;background:#a0a0a0;"></div>
<span class="t ls" style="top:499px;left:321px;letter-spacing:-0.42px;">Server</span>
<svg style="left:462px;top:503px;" width="6" height="9" viewBox="0 0 6 9"><path d="M0.5 0 L5.5 4.500 L0.500 9 Z" fill="#ff0099"/></svg>
<div style="left:319px;top:519px;width:154px;height:1px;background:#a0a0a0;"></div>
<span class="t ls" style="top:524px;left:321px;letter-spacing:0.32px;">Copy</span>
<svg style="left:462px;top:528px;" width="6" height="9" viewBox="0 0 6 9"><path d="M0.5 0 L5.5 4.500 L0.500 9 Z" fill="#ff0099"/></svg>
<span class="t ls" style="top:547px;left:321px;letter-spacing:-0.03px;">Command IRC</span>
<div style="left:319px;top:567px;width:154px;height:1px;background:#a0a0a0;"></div>
<span class="t ls" style="top:572px;left:321px;letter-spacing:-0.06px;">Open Folder</span>
<div style="left:319px;top:592px;width:154px;height:1px;background:#a0a0a0;"></div>
<span class="t ls" style="top:597px;left:321px;letter-spacing:-0.44px;">Execute IRC CMD</span>
<span class="t ls" style="top:620px;left:321px;letter-spacing:-0.38px;">FFMPEG Plugin</span>
<span class="t ls" style="top:643px;left:321px;letter-spacing:-0.06px;">VNC Plugin</span>
<span class="t ls" style="top:666px;left:321px;letter-spacing:0.07px;">NBMiner Plugin</span>
<span class="t ls" style="top:689px;left:321px;letter-spacing:-0.27px;">Start VNC</span>
<span class="t ls" style="top:712px;left:321px;letter-spacing:-0.07px;">Start NBMiner</span>
<div style="left:319px;top:732px;width:154px;height:1px;background:#a0a0a0;"></div>
<span class="t ls" style="top:737px;left:321px;letter-spacing:-0.29px;">Start Proxy</span>
<span class="t ls" style="top:760px;left:321px;letter-spacing:-0.25px;">Stop Proxy</span>
<div style="left:319px;top:780px;width:154px;height:1px;background:#a0a0a0;"></div>
<span class="t ls" style="top:785px;left:321px;letter-spacing:0.13px;">Active Window</span>
<div style="left:319px;top:805px;width:154px;height:1px;background:#a0a0a0;"></div>
<span class="t ls" style="top:810px;left:321px;letter-spacing:-0.0px;">RunAs (Administrator)</span>
<svg width="0" height="0" style="left:0;top:0"><defs>
<radialGradient id="gInfo" cx="40%" cy="30%" r="75%"><stop offset="0" stop-color="#8fdcf6"/><stop offset=".55" stop-color="#38a8d8"/><stop offset="1" stop-color="#1a6f9c"/></radialGradient>
<linearGradient id="gFold" x1="0" y1="0" x2="0" y2="1"><stop offset="0" stop-color="#fee490"/><stop offset="1" stop-color="#f8b638"/></linearGradient>
<linearGradient id="gPuz" gradientUnits="userSpaceOnUse" x1="2" y1="1" x2="11" y2="14"><stop offset="0" stop-color="#b4e4ff"/><stop offset=".5" stop-color="#4a98ea"/><stop offset="1" stop-color="#2444d0"/></linearGradient>
<linearGradient id="gPuzO" gradientUnits="userSpaceOnUse" x1="2" y1="1" x2="12" y2="14"><stop offset="0" stop-color="#2a98f0"/><stop offset=".45" stop-color="#1848c8"/><stop offset="1" stop-color="#00008c"/></linearGradient>
<radialGradient id="gGlobe" cx="45%" cy="40%" r="70%"><stop offset="0" stop-color="#b8d8f8"/><stop offset=".6" stop-color="#4f8fe0"/><stop offset="1" stop-color="#1c58c0"/></radialGradient>
<radialGradient id="gWeb" cx="50%" cy="35%" r="75%"><stop offset="0" stop-color="#5cc0f4"/><stop offset="1" stop-color="#1a78c8"/></radialGradient>
<radialGradient id="gDark" cx="40%" cy="35%" r="75%"><stop offset="0" stop-color="#7a8088"/><stop offset="1" stop-color="#33383e"/></radialGradient>
<linearGradient id="gDoor" x1="0" y1="0" x2="1" y2="0"><stop offset="0" stop-color="#f2f2f2"/><stop offset="1" stop-color="#a8a8a8"/></linearGradient>
</defs></svg>
<svg style="left:43px;top:71px;" width="16" height="15" viewBox="0 0 16 15"><g fill="none" stroke-linecap="round"><g stroke="url(#gPuzO)" stroke-width="4.300"><path d="M5.800 2.300 L3.500 12.600 M12.200 2.300 L9.800 12.600 M2.800 4.800 H14 M2 10.200 H12.800"/></g><g stroke="url(#gPuz)" stroke-width="2.900"><path d="M5.700 2.200 L3.400 12.400 M12.100 2.200 L9.700 12.400 M2.600 4.600 H13.800 M1.800 10 H12.600"/></g></g><rect x="6.300" y="6" width="3.200" height="2.800" fill="#fff" stroke="#1a36c8" stroke-width=".5"/></svg>
<svg style="left:185px;top:55px;" width="16" height="15" viewBox="0 0 16 15"><g fill="none" stroke-linecap="round"><g stroke="url(#gPuzO)" stroke-width="4.300"><path d="M5.800 2.300 L3.500 12.600 M12.200 2.300 L9.800 12.600 M2.800 4.800 H14 M2 10.200 H12.800"/></g><g stroke="url(#gPuz)" stroke-width="2.900"><path d="M5.700 2.200 L3.400 12.400 M12.100 2.200 L9.700 12.400 M2.600 4.600 H13.800 M1.800 10 H12.600"/></g></g><rect x="6.300" y="6" width="3.200" height="2.800" fill="#fff" stroke="#1a36c8" stroke-width=".5"/></svg>
<svg style="left:31px;top:55px;" width="14" height="14" viewBox="0 0 14 14"><circle cx="7" cy="7" r="6.600" fill="url(#gGlobe)" stroke="#1c58c0" stroke-width=".8"/><g stroke="#e8f2ff" stroke-width=".7" fill="none" opacity=".85"><path d="M2 10.500 L11.500 2.500 M3.500 3.500 L11 11.500 M1 6 Q7 8.500 13 5.500 M6 .8 Q4 7 7.500 13"/></g></svg>
<svg style="left:11px;top:12px;" width="16" height="16" viewBox="0 0 16 16"><g shape-rendering="crispEdges"><rect x="8" y="0" width="6" height="1" fill="#222"/><rect x="7" y="1" width="2" height="1" fill="#222"/><rect x="14" y="1" width="1" height="1" fill="#222"/><rect x="9" y="1" width="5" height="6" fill="#8a9aa4"/><rect x="14" y="2" width="2" height="4" fill="#1c1c1c"/><rect x="10" y="3" width="1" height="2" fill="#111"/><rect x="12" y="3" width="1" height="2" fill="#111"/><rect x="6" y="2" width="3" height="5" fill="#dfe3e4"/><rect x="7" y="3" width="1" height="1" fill="#444"/><rect x="6" y="5" width="1" height="1" fill="#555"/><rect x="5" y="6" width="5" height="2" fill="#f4f4f4"/><rect x="10" y="7" width="5" height="7" fill="#3e4c54"/><rect x="9" y="8" width="1" height="5" fill="#3e4c54"/><rect x="5" y="8" width="4" height="1" fill="#222"/><rect x="5" y="9" width="2" height="2" fill="#222"/><rect x="7" y="10" width="1" height="2" fill="#333"/><rect x="3" y="9" width="2" height="2" fill="#d8dcdc"/><rect x="2" y="11" width="2" height="2" fill="#dfe3e3"/><rect x="4" y="11" width="1" height="2" fill="#444"/><rect x="0" y="13" width="3" height="2" fill="#e4e8e8"/><rect x="3" y="14" width="1" height="1" fill="#444"/><rect x="0" y="15" width="3" height="1" fill="#666"/><rect x="7" y="11" width="3" height="3" fill="#f0f2f2"/><rect x="6" y="14" width="5" height="1" fill="#f0f2f2"/><rect x="13" y="12" width="3" height="3" fill="#e8ecec"/><rect x="11" y="14" width="2" height="1" fill="#222"/><rect x="6" y="15" width="10" height="1" fill="#3a3a3a"/><rect x="15" y="13" width="1" height="3" fill="#222"/></g></svg>
<svg style="left:1148px;top:7px;" width="16" height="16" viewBox="0 0 16 16"><g shape-rendering="crispEdges"><rect x="8" y="0" width="6" height="1" fill="#222"/><rect x="7" y="1" width="2" height="1" fill="#222"/><rect x="14" y="1" width="1" height="1" fill="#222"/><rect x="9" y="1" width="5" height="6" fill="#8a9aa4"/><rect x="14" y="2" width="2" height="4" fill="#1c1c1c"/><rect x="10" y="3" width="1" height="2" fill="#111"/><rect x="12" y="3" width="1" height="2" fill="#111"/><rect x="6" y="2" width="3" height="5" fill="#dfe3e4"/><rect x="7" y="3" width="1" height="1" fill="#444"/><rect x="6" y="5" width="1" height="1" fill="#555"/><rect x="5" y="6" width="5" height="2" fill="#f4f4f4"/><rect x="10" y="7" width="5" height="7" fill="#3e4c54"/><rect x="9" y="8" width="1" height="5" fill="#3e4c54"/><rect x="5" y="8" width="4" height="1" fill="#222"/><rect x="5" y="9" width="2" height="2" fill="#222"/><rect x="7" y="10" width="1" height="2" fill="#333"/><rect x="3" y="9" width="2" height="2" fill="#d8dcdc"/><rect x="2" y="11" width="2" height="2" fill="#dfe3e3"/><rect x="4" y="11" width="1" height="2" fill="#444"/><rect x="0" y="13" width="3" height="2" fill="#e4e8e8"/><rect x="3" y="14" width="1" height="1" fill="#444"/><rect x="0" y="15" width="3" height="1" fill="#666"/><rect x="7" y="11" width="3" height="3" fill="#f0f2f2"/><rect x="6" y="14" width="5" height="1" fill="#f0f2f2"/><rect x="13" y="12" width="3" height="3" fill="#e8ecec"/><rect x="11" y="14" width="2" height="1" fill="#222"/><rect x="6" y="15" width="10" height="1" fill="#3a3a3a"/><rect x="15" y="13" width="1" height="3" fill="#222"/></g></svg>
<svg style="left:293px;top:106px;" width="16" height="16" viewBox="0 0 16 16"><circle cx="8" cy="8" r="7.400" fill="url(#gInfo)" stroke="#3a5a68" stroke-width=".9"/><path d="M8.600 6.300 L7.300 12.300" stroke="#fff" stroke-width="1.800" stroke-linecap="round"/><circle cx="9.300" cy="3.900" r="1.100" fill="#fff"/></svg>
<svg style="left:293px;top:129px;" width="16" height="16" viewBox="0 0 16 16"><path d="M1 3.500 Q1 2.500 2 2.500 H6 L7.500 4 H14 Q15 4 15 5 V13 Q15 14 14 14 H2 Q1 14 1 13 Z" fill="#f2ae30"/><path d="M1.200 6.200 Q1.200 5.400 2.200 5.400 H14.200 Q15.400 5.400 15.200 6.400 L14.500 13.200 Q14.400 14 13.500 14 H2.500 Q1.700 14 1.600 13.200 Z" fill="url(#gFold)" stroke="#eea828" stroke-width=".5"/><path d="M5.500 6 V13.500 M9.500 6 V13.500" stroke="#f4b848" stroke-width=".7" opacity=".6"/></svg>
<svg style="left:293px;top:572px;" width="16" height="16" viewBox="0 0 16 16"><path d="M1 3.500 Q1 2.500 2 2.500 H6 L7.500 4 H14 Q15 4 15 5 V13 Q15 14 14 14 H2 Q1 14 1 13 Z" fill="#f2ae30"/><path d="M1.200 6.200 Q1.200 5.400 2.200 5.400 H14.200 Q15.400 5.400 15.200 6.400 L14.500 13.200 Q14.400 14 13.500 14 H2.500 Q1.700 14 1.600 13.200 Z" fill="url(#gFold)" stroke="#eea828" stroke-width=".5"/><path d="M5.500 6 V13.500 M9.500 6 V13.500" stroke="#f4b848" stroke-width=".7" opacity=".6"/></svg>
<svg style="left:293px;top:152px;" width="16" height="16" viewBox="0 0 16 16"><g stroke="#2f8f2f" stroke-width=".4"><path d="M1 2.500 L3.500 1 L6 2.500 L3.500 4 Z" fill="#8fe08f"/><path d="M1 2.500 V5 L3.500 6.500 V4 Z" fill="#3fae3f"/><path d="M6 2.500 V5 L3.500 6.500 V4 Z" fill="#2f982f"/><path d="M3.500 6 L8.500 3.500 L14.500 6.500 L9.500 9.500 Z" fill="#8fe08f"/><path d="M3.500 6 V11.500 L9.500 15 V9.500 Z" fill="#48b848"/><path d="M14.500 6.500 V12 L9.500 15 V9.500 Z" fill="#2f982f"/><path d="M6.500 7.800 V13.200 M12 8 V13.500 M3.500 8.700 L9.500 12.200 L14.500 9.200" fill="none" stroke="#2a882a" stroke-width=".5"/></g></svg>
<svg style="left:293px;top:175px;" width="16" height="16" viewBox="0 0 16 16"><path d="M8 1 L9.200 1.200 L9.600 2.800 L11 3.400 L12.400 2.500 L13.500 3.600 L12.600 5 L13.200 6.400 L14.800 6.800 L15 8 L14.800 9.200 L13.200 9.600 L12.600 11 L13.500 12.400 L12.400 13.500 L11 12.600 L9.600 13.200 L9.200 14.800 L8 15 L6.800 14.800 L6.400 13.200 L5 12.600 L3.600 13.500 L2.500 12.400 L3.400 11 L2.800 9.600 L1.200 9.200 L1 8 L1.200 6.800 L2.800 6.400 L3.400 5 L2.500 3.600 L3.600 2.500 L5 3.400 L6.400 2.800 L6.800 1.200 Z" fill="#e6e4dc" stroke="#d2d0c8" stroke-width=".6"/><rect x="5.500" y="5.500" width="5" height="5" rx="1" fill="#efedde" stroke="#d4d2ca" stroke-width=".6"/></svg>
<svg style="left:293px;top:198px;" width="16" height="16" viewBox="0 0 16 16"><g transform="translate(0 2.500) scale(1 .78)"><path d="M8 1 L9.200 1.200 L9.600 2.800 L11 3.400 L12.400 2.500 L13.500 3.600 L12.600 5 L13.200 6.400 L14.800 6.800 L15 8 L14.800 9.200 L13.200 9.600 L12.600 11 L13.500 12.400 L12.400 13.500 L11 12.600 L9.600 13.200 L9.200 14.800 L8 15 L6.800 14.800 L6.400 13.200 L5 12.600 L3.600 13.500 L2.500 12.400 L3.400 11 L2.800 9.600 L1.200 9.200 L1 8 L1.200 6.800 L2.800 6.400 L3.400 5 L2.500 3.600 L3.600 2.500 L5 3.400 L6.400 2.800 L6.800 1.200 Z" fill="#c6c6c6" stroke="#e2e2e2" stroke-width=".7"/><ellipse cx="8" cy="8" rx="3" ry="2.600" fill="#efedde" stroke="#9a9a9a" stroke-width=".6"/></g></svg>
<svg style="left:293px;top:221px;" width="16" height="16" viewBox="0 0 16 16"><rect x="1" y="1.500" width="14" height="12.500" rx="1" fill="#fff" stroke="#78b0f0" stroke-width="1.200"/><rect x="1" y="1.500" width="14" height="2.600" fill="#88bcf4"/><circle cx="8" cy="8.800" r="3" fill="#e8902a"/><circle cx="8" cy="8.800" r="1.100" fill="#b06a30"/><path d="M8 4.800 V12.800 M4 8.800 H12 M5.200 6 L10.800 11.600 M10.800 6 L5.200 11.600" stroke="#e8902a" stroke-width="1.200"/></svg>
<svg style="left:293px;top:244px;" width="16" height="16" viewBox="0 0 16 16"><circle cx="8" cy="10.500" r="5.300" fill="url(#gWeb)" stroke="#8ac4ec" stroke-width=".8"/><path d="M4 11 Q6 9 8 11.500 Q10 13.500 12.500 11" stroke="#dff0fc" stroke-width="1.300" fill="none"/><path d="M4.600 1 L8 3.200 L11.400 1 L8 10 Z" fill="#e0242c" stroke="#b01018" stroke-width=".4"/></svg>
<svg style="left:293px;top:267px;" width="16" height="16" viewBox="0 0 16 16"><rect x=".5" y=".5" width="15" height="14.500" rx="1.200" fill="#c8c8c8" stroke="#a8a8a8" stroke-width=".6"/><rect x="1.800" y="1.800" width="12.400" height="10.400" fill="#303030"/><path d="M4.500 4.800 L7 6.500 L4.500 8.200 M8 8.800 H10.500" stroke="#d0d0d0" stroke-width=".9" fill="none"/></svg>
<svg style="left:293px;top:290px;" width="16" height="16" viewBox="0 0 16 16"><g fill="#f8f8f4" stroke="#9a9a96" stroke-width=".6"><rect x=".5" y="3.500" width="4.600" height="4" /><rect x="5.600" y="3.500" width="4.600" height="4"/><rect x="10.700" y="3.500" width="4.600" height="4"/><rect x="1.500" y="8.300" width="6.400" height="4"/><rect x="8.500" y="8.300" width="6.400" height="4"/></g><g fill="#8a8a8a"><rect x="2.400" y="5" width="1" height="1"/><rect x="7.400" y="5" width="1" height="1"/><rect x="12.500" y="5" width="1" height="1"/><rect x="4.200" y="9.800" width="1" height="1"/><rect x="11.200" y="9.800" width="1" height="1"/></g></svg>
<svg style="left:293px;top:313px;" width="16" height="16" viewBox="0 0 16 16"><circle cx="8" cy="8" r="7.300" fill="url(#gDark)"/><path d="M3 5 Q6 2 10 3.500 Q12 6 9 8 Q5 9 3 5 Z M6 11 Q9 9.500 12 11.500 Q10 14.500 7 14 Z" fill="#6c8a78" opacity=".8"/><rect x="1" y="7.600" width="14" height="1.200" fill="#6ce0f4"/></svg>
<svg style="left:293px;top:336px;" width="16" height="16" viewBox="0 0 16 16"><path d="M8 1 Q10.500 1 11 4.200 L13.800 5 Q14 6 8 6.200 Q2 6 2.200 5 L5 4.200 Q5.500 1 8 1 Z" fill="#2a2a2a"/><path d="M5 6.500 H11 L11.500 9 Q14 10 14 14.500 Q8 15.800 2 14.500 Q2 10 4.500 9 Z" fill="#2e2e2e"/></svg>
<svg style="left:293px;top:359px;" width="16" height="16" viewBox="0 0 16 16"><g fill="none"><circle cx="5" cy="5" r="3.400" fill="#eceae6" stroke="#dcdad4" stroke-width=".8"/><path d="M5 8 V15" stroke="#d8d6d0" stroke-width="1.800"/><path d="M9 2 L13.500 12.500 M11.800 3 L8.500 9.500 M12.300 9.800 L14.500 8.800" stroke="#ecc98a" stroke-width="1.500"/></g></svg>
<svg style="left:293px;top:382px;" width="16" height="16" viewBox="0 0 16 16"><rect x="2" y="0.500" width="12" height="15" fill="#3c424c"/><g fill="#7ab0e0"><rect x="8.500" y="2" width="4.500" height="1.200"/><rect x="8.500" y="4.400" width="4.500" height="1.200"/><rect x="8.500" y="6.800" width="4.500" height="1.200"/></g><g fill="#9aa0a8"><rect x="3" y="2" width="4.500" height="1"/><rect x="3" y="4.400" width="4.500" height="1"/><rect x="3" y="6.800" width="4.500" height="1"/><rect x="3" y="9.200" width="10" height=".8"/></g><rect x="7" y="12.500" width="2" height="1.300" fill="#58b8f0"/><rect x="10" y="12.500" width="2" height="1.300" fill="#58b8f0"/></svg>
<svg style="left:293px;top:405px;" width="16" height="16" viewBox="0 0 16 16"><circle cx="8" cy="8" r="7.400" fill="#454545" stroke="#6a6a6a" stroke-width=".6"/><path d="M4.500 5.500 L7.500 7.300 L4.500 9 M7.500 9.800 L11.500 10.800" stroke="#4cc83c" stroke-width="1.500" fill="none"/></svg>
<svg style="left:293px;top:428px;" width="16" height="16" viewBox="0 0 16 16"><circle cx="8" cy="8" r="7.500" fill="#4aa8e8"/><circle cx="8" cy="8" r="5.600" fill="url(#gWeb)" stroke="#a8d8f8" stroke-width=".8"/><path d="M5 5.500 Q6.500 4 8 5 Q7.500 7 6.500 8 Q6 10 7.500 11.500 Q5.500 11 4.500 8.500 Z M9.500 6.500 Q11 5.500 12 7.500 Q11.500 10 10 11 Q9.500 9 9.500 6.500 Z" fill="#f4fbff"/></svg>
<svg style="left:293px;top:451px;" width="16" height="16" viewBox="0 0 16 16"><path d="M2 5 L8 3 L14 5 V13 L8 15.500 L2 13 Z" fill="#d9b87c" stroke="#c4a060" stroke-width=".5"/><path d="M8 7 V15.500 M2 5 L8 7 L14 5" stroke="#b8945a" stroke-width=".7" fill="none"/><circle cx="5.500" cy="3.500" r="1.800" fill="#2c3a2c"/><circle cx="8.500" cy="2.800" r="1.800" fill="#e8c828"/><circle cx="11" cy="3.800" r="1.700" fill="#3878d8"/><circle cx="7" cy="4.500" r="1.200" fill="#58a838"/></svg>
<svg style="left:293px;top:474px;" width="16" height="16" viewBox="0 0 16 16"><circle cx="8" cy="8" r="7.400" fill="url(#gDark)"/><g fill="#4cd0f4"><circle cx="5" cy="6" r=".8"/><circle cx="9" cy="4" r=".7"/><circle cx="11.500" cy="8" r=".8"/><circle cx="7" cy="10.500" r=".8"/><circle cx="10" cy="12" r=".7"/><circle cx="3.500" cy="9.500" r=".6"/></g><path d="M5 6 L9 4 L11.500 8 L7 10.500 Z" stroke="#3aa8c8" stroke-width=".4" fill="none"/></svg>
<svg style="left:293px;top:499px;" width="16" height="16" viewBox="0 0 16 16"><path d="M4 2 L11 1 V15 L4 14 Z" fill="#ecece8" stroke="#c4c4c0" stroke-width=".7"/><path d="M11 1 L12.500 2 V14 L11 15 Z" fill="#c8c8c4"/><path d="M5.500 4 L9.500 3.600 M5.500 6 L9.500 5.700" stroke="#b0b0ac" stroke-width=".8"/><circle cx="9" cy="10" r=".9" fill="#48c048"/></svg>
<svg style="left:292px;top:523px;" width="18" height="18" viewBox="0 0 18 18"><rect x="0" y="0" width="18" height="18" fill="#f2f1ea"/><path d="M1 2 H10 L12 4 V16 H1 Z" fill="#dedede" stroke="#bdbdbd" stroke-width=".6"/><path d="M8 .5 H15 L17.500 3 V15 H12" fill="#ececec" stroke="#d4d4d4" stroke-width=".6"/><path d="M2.500 5 H9 M2.500 7 H10 M2.500 9 H9.500 M2.500 11 H8 M2.500 13 H9" stroke="#a2a2a2" stroke-width=".7"/><rect x="13" y="14.500" width="4.500" height="2" fill="#555"/></svg>
<svg style="left:293px;top:547px;" width="16" height="16" viewBox="0 0 16 16"><path d="M8 1 Q8.800 1 9 2 Q13 3 13.200 9 L14.500 12 Q15.500 14.800 8 15 Q.5 14.800 1.500 12 L2.800 9 Q3 3 7 2 Q7.200 1 8 1 Z" fill="#6e6e6e"/><path d="M1.800 12.300 Q8 14.200 14.200 12.300" stroke="#3e3e3e" stroke-width="1.300" fill="none"/><path d="M8 5.500 L8.700 7.300 L10.500 7.300 L9.100 8.500 L9.600 10.300 L8 9.300 L6.400 10.300 L6.900 8.500 L5.500 7.300 L7.300 7.300 Z" fill="#dff0ff" stroke="#a8c8e8" stroke-width=".3"/></svg>
<svg style="left:293px;top:597px;" width="16" height="16" viewBox="0 0 16 16"><rect x=".5" y=".5" width="15" height="15" rx="3" fill="#7cb54a" stroke="#94c468" stroke-width=".6"/><ellipse cx="8.300" cy="7.300" rx="4.800" ry="4.200" fill="#f2f8ec"/><path d="M4.500 9.500 L3.200 12.800 L7 11" fill="#f2f8ec"/><path d="M7 8.500 Q7.500 5.500 10 5.500 Q10 8.500 7 8.500 Z" fill="#7cb54a"/></svg>
<svg style="left:293px;top:620px;" width="16" height="16" viewBox="0 0 16 16"><circle cx="8" cy="8" r="7" fill="#f0f0ee" stroke="#dcdcd8" stroke-width=".8"/><circle cx="8" cy="8" r="2.900" fill="#d8602c"/></svg>
<svg style="left:293px;top:643px;" width="16" height="16" viewBox="0 0 16 16"><rect x=".6" y=".6" width="14.800" height="14.800" fill="#fff" stroke="#111" stroke-width="1.100"/><path d="M2.200 2.500 L4 4.500 M4 2.500 L2.200 4.500" stroke="#d02020" stroke-width=".8"/><ellipse cx="10" cy="4" rx="3.300" ry="1.700" fill="#fff" stroke="#111" stroke-width=".7"/><circle cx="10" cy="4" r="1.300" fill="#1838d8"/><text x="1.500" y="12.600" font-family="Liberation Sans,sans-serif" font-weight="bold" font-size="7.500" textLength="13" lengthAdjust="spacingAndGlyphs" fill="#111">VNC</text><rect x="6" y="13.300" width="8.500" height="1" fill="#e02020"/></svg>
<svg style="left:293px;top:689px;" width="16" height="16" viewBox="0 0 16 16"><rect x=".6" y=".6" width="14.800" height="14.800" fill="#fff" stroke="#111" stroke-width="1.100"/><path d="M2.200 2.500 L4 4.500 M4 2.500 L2.200 4.500" stroke="#d02020" stroke-width=".8"/><ellipse cx="10" cy="4" rx="3.300" ry="1.700" fill="#fff" stroke="#111" stroke-width=".7"/><circle cx="10" cy="4" r="1.300" fill="#1838d8"/><text x="1.500" y="12.600" font-family="Liberation Sans,sans-serif" font-weight="bold" font-size="7.500" textLength="13" lengthAdjust="spacingAndGlyphs" fill="#111">VNC</text><rect x="6" y="13.300" width="8.500" height="1" fill="#e02020"/></svg>
<svg style="left:292px;top:665px;" width="18" height="18" viewBox="0 0 18 18"><path d="M1 4 H17 L16 13 H2 Z" fill="#c9a690" stroke="#3a2c24" stroke-width="1"/><path d="M1 7 H17 M2 10 H16" stroke="#8a6654" stroke-width=".8" stroke-dasharray="3 1.500"/><rect x="2" y="1.500" width="14" height="2.500" fill="#9a8478" stroke="#3a2c24" stroke-width=".6"/><circle cx="5" cy="15" r="2" fill="#4a3a32"/><circle cx="13" cy="15" r="2" fill="#4a3a32"/><rect x="1" y="13" width="16" height="1.500" fill="#5a4a42"/></svg>
<svg style="left:292px;top:711px;" width="18" height="18" viewBox="0 0 18 18"><path d="M1 16.500 L15.500 2.500" stroke="#3a3224" stroke-width="3.400" stroke-linecap="square"/><path d="M1 16.500 L15.500 2.500" stroke="#b08a4c" stroke-width="1.800" stroke-linecap="square"/><path d="M12 1 H17.500 V6.500 Z" fill="#2a8a84" stroke="#1c3c3a" stroke-width=".6"/></svg>
<svg style="left:292px;top:736px;" width="18" height="18" viewBox="0 0 18 18"><rect x="0" y="0" width="18" height="18" fill="#e8eef6"/><path d="M0 0 H18 V18 H0 Z M3 1.500 V16.500 H15 V1.500 Z" fill="#b4c8e4" fill-rule="evenodd" opacity=".7"/><path d="M4 2 L12.500 3.200 V15 L4 16.500 Z" fill="url(#gDoor)" stroke="#8c8c8c" stroke-width=".5"/><path d="M12.500 3.200 H15 V16.500 H4 L12.500 15 Z" fill="#fafafa"/><path d="M4 16.500 L12.500 15 H15 V16.500 Z" fill="#8a9a58"/><path d="M0 15 Q9 19 18 15 V18 H0 Z" fill="#5a8ad0" opacity=".8"/></svg>
<svg style="left:292px;top:759px;" width="18" height="18" viewBox="0 0 18 18"><rect x="0" y="0" width="18" height="18" fill="#e8eef6"/><path d="M0 0 H18 V18 H0 Z M3 1.500 V16.500 H15 V1.500 Z" fill="#b4c8e4" fill-rule="evenodd" opacity=".7"/><path d="M4 2 L12.500 3.200 V15 L4 16.500 Z" fill="url(#gDoor)" stroke="#8c8c8c" stroke-width=".5"/><path d="M12.500 3.200 H15 V16.500 H4 L12.500 15 Z" fill="#fafafa"/><path d="M4 16.500 L12.500 15 H15 V16.500 Z" fill="#8a9a58"/><path d="M0 15 Q9 19 18 15 V18 H0 Z" fill="#5a8ad0" opacity=".8"/></svg>
<svg style="left:293px;top:810px;" width="16" height="16" viewBox="0 0 16 16"><path d="M8 .8 Q11.500 2.500 15 2.300 Q15.500 11 8 15.500 Q.5 11 1 2.300 Q4.500 2.500 8 .8 Z" fill="#f4c45c" stroke="#e8e4d8" stroke-width=".6"/><path d="M8 .8 Q4.500 2.500 1 2.300 Q.8 5.500 1.600 8 H8 Z" fill="#3c84d4"/><path d="M8 8 H14.400 Q12.800 12.600 8 15.500 Z" fill="#3c84d4"/></svg>
</body></html>
